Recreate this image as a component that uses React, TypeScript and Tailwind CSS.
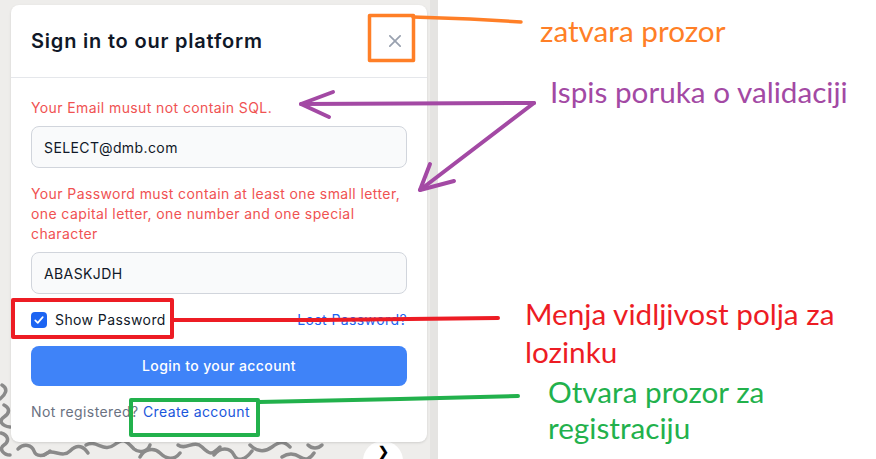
import React from "react";

const cardFont = { fontFamily: "Inter, 'Noto Sans', sans-serif" };
const noteFont = { fontFamily: "Lato, 'Open Sans', sans-serif" };

function Squiggles() {
  // background texture peeking out under the modal
  return (
    <svg
      className="absolute left-0 bottom-0"
      width="438"
      height="80"
      viewBox="0 0 438 80"
      fill="none"
      stroke="#8a8a8a"
      strokeWidth="3.5"
      strokeLinecap="round"
    >
      <path d="M2 6c7 4 3 10 -2 14" />
      <path d="M4 26c6 3 6 8 0 12s-2 9 6 10" />
      <path d="M1 54c7 2 9 8 3 12s0 10 6 10" />
      <path d="M18 70c6-6 14-4 16 2s10 6 16 0" />
      <path d="M44 76c8-8 18 4 26-4s14-4 18 2" />
      <path d="M86 66c10-6 18 8 28 0s12-4 20 4c6 5 14 2 16-4" />
      <path d="M140 78c4-8 14-10 20-4s14 8 20 0" />
      <path d="M178 66c8 6 16-6 24 2s10 8 18 0" />
      <path d="M214 76c6-8 16-8 20 0s12 4 18-4" />
      <path d="M250 66c6 6 14 8 22 2s12-6 18 0" />
      <path d="M282 78c6-4 12-4 18 0s10 2 14-4" />
      <path d="M308 66c4 4 10 4 14 0" />
    </svg>
  );
}

function Annotations() {
  return (
    <div className="absolute inset-0 z-20 pointer-events-none">
      <svg
        className="absolute inset-0"
        width="876"
        height="459"
        viewBox="0 0 876 459"
        fill="none"
        strokeLinecap="round"
        strokeLinejoin="round"
      >
        {/* close */}
        <rect x="369.5" y="15.5" width="44" height="45" stroke="#ff7f27" strokeWidth="3.5" strokeLinecap="butt" />
        <path d="M413 17 L470 19 L521 22" stroke="#ff7f27" strokeWidth="3.5" />
        {/* validation */}
        <path d="M534 103 L301 104" stroke="#a349a4" strokeWidth="4" />
        <path d="M333 92 L301 104 L329 117" stroke="#a349a4" strokeWidth="4" />
        <path d="M534 103 L420 190" stroke="#a349a4" strokeWidth="4" />
        <path d="M430 164 L420 190 L454 181" stroke="#a349a4" strokeWidth="4" />
        {/* show password */}
        <rect x="13" y="300" width="159" height="37" stroke="#ed1c24" strokeWidth="4" strokeLinecap="butt" />
        <path d="M172 320 L320 320 L498 318" stroke="#ed1c24" strokeWidth="4" />
        {/* create account */}
        <rect x="131" y="400" width="127" height="35" stroke="#22b14c" strokeWidth="4" strokeLinecap="butt" />
        <path d="M259 402 L400 399 L518 396" stroke="#22b14c" strokeWidth="4" />
      </svg>
      <div style={noteFont} className="absolute left-[540px] top-[12px] text-[29.7px] leading-[38px] text-[#ff7f27]">
        zatvara prozor
      </div>
      <div style={noteFont} className="absolute left-[550px] top-[73px] text-[29.7px] leading-[38px] text-[#a349a4]">
        Ispis poruka o validaciji
      </div>
      <div style={noteFont} className="absolute left-[525px] top-[295px] w-[330px] text-[29.7px] leading-[38px] text-[#ed1c24]">
        Menja vidljivost polja za lozinku
      </div>
      <div style={noteFont} className="absolute left-[548px] top-[374px] w-[300px] text-[29.7px] leading-[36px] text-[#22b14c]">
        Otvara prozor za registraciju
      </div>
    </div>
  );
}

function SignInModal() {
  return (
    <div style={cardFont} className="relative z-10 w-[416px] ml-[11px] mt-[5px] rounded-lg bg-white shadow-sm tracking-[0.4px]">
      <div className="flex items-center justify-between px-5 py-[22px] border-b border-gray-200">
        <h3 className="text-xl leading-7 font-semibold tracking-[0.8px] text-gray-900">Sign in to our platform</h3>
        <button className="w-8 h-8 -my-1 -mr-1 flex items-center justify-center rounded-lg text-gray-400">
          <svg className="w-3 h-3" viewBox="0 0 14 14" fill="none" stroke="currentColor" strokeWidth="2" strokeLinecap="round">
            <path d="m1 1 12 12M13 1 1 13" />
          </svg>
        </button>
      </div>
      <div className="px-5 pt-5 pb-5">
        <p className="text-sm text-[#f05252] mb-2">Your Email musut not contain SQL.</p>
        <input
          readOnly
          value="SELECT@dmb.com"
          className="block w-full h-[42px] px-3 text-sm tracking-[0.4px] text-gray-900 bg-gray-50 border border-gray-300 rounded-lg outline-none"
        />
        <p className="text-sm text-[#f05252] mt-4 mb-2">
          Your Password must contain at least one small letter, one capital letter, one number and one special character
        </p>
        <input
          readOnly
          value="ABASKJDH"
          className="block w-full h-[42px] px-3 text-sm tracking-[0.4px] text-gray-900 bg-gray-50 border border-gray-300 rounded-lg outline-none"
        />
        <div className="flex items-center justify-between mt-4">
          <label className="flex items-center gap-2 text-sm text-gray-900">
            <span className="w-4 h-4 rounded bg-[#1c64f2] flex items-center justify-center">
              <svg className="w-2.5 h-2.5" viewBox="0 0 12 10" fill="none" stroke="white" strokeWidth="2" strokeLinecap="round" strokeLinejoin="round">
                <path d="M1.5 5.5 4.5 8.5 10.5 1.5" />
              </svg>
            </span>
            Show Password
          </label>
          <a className="text-sm text-[#1c64f2]">Lost Password?</a>
        </div>
        <button className="w-full h-10 mt-4 rounded-lg bg-[#3f83f8] text-sm font-medium tracking-[0.4px] text-white">
          Login to your account
        </button>
        <div className="mt-4 text-sm text-gray-500">
          Not registered? <a className="text-[#1a56db]">Create account</a>
        </div>
      </div>
    </div>
  );
}

export default function App() {
  return (
    <div className="relative flex w-[876px] h-[459px] overflow-hidden bg-white">
      <div className="relative w-[430px] h-full bg-[#eeedeb]">
        <Squiggles />
        <SignInModal />
        <div className="absolute left-[363px] top-[441px] w-10 h-10 rounded-full bg-white flex justify-center pt-[3px] text-[13px] leading-[14px] font-bold text-black">
          ❯
        </div>
      </div>
      <div className="w-2 h-full bg-[#e5e4e2]" />
      <div className="flex-1 h-full bg-white" />
      <Annotations />
    </div>
  );
}
